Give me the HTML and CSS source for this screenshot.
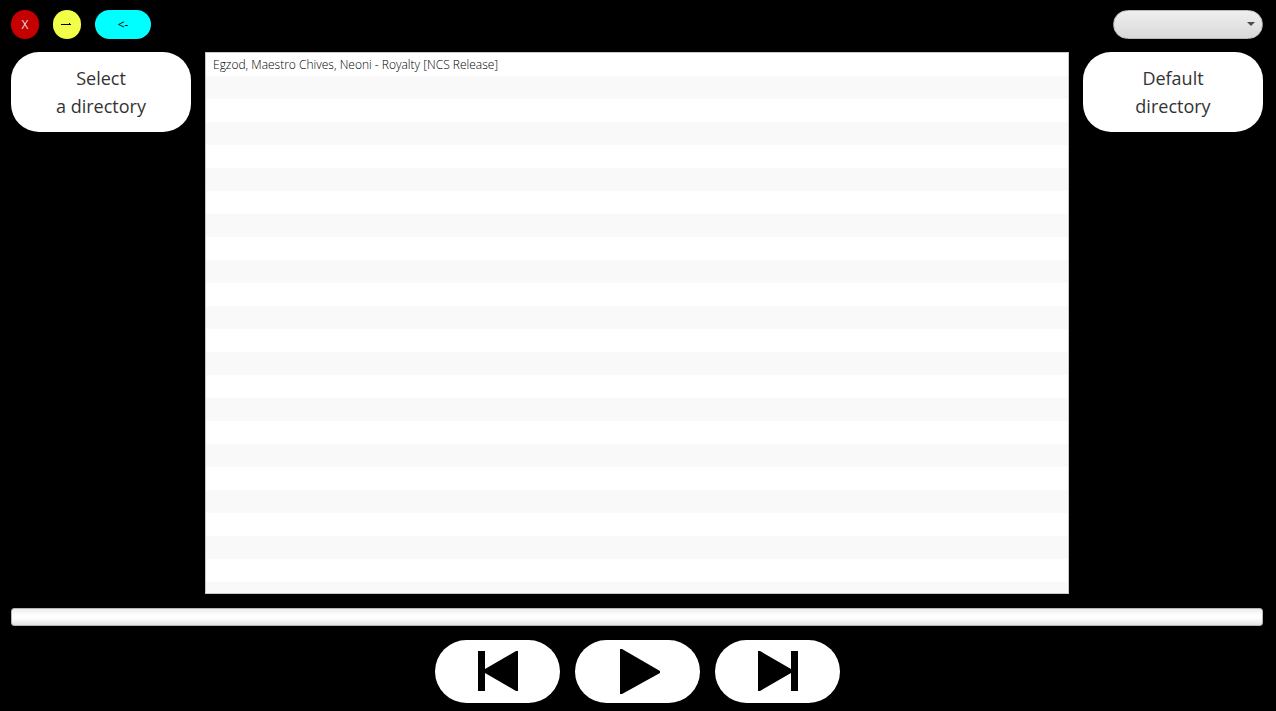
FILE: index.html
```html
<!DOCTYPE html>
<html lang="en">
<head>
<meta charset="utf-8">
<title>Music player</title>
<link rel="stylesheet" href="styles.css">
</head>
<body>
<div class="player">
  <header class="topbar">
    <button class="pill close" type="button">X</button>
    <button class="pill minimize" type="button" aria-label="Minimize">
      <svg width="12" height="6" viewBox="0 0 12 6" aria-hidden="true"><path d="M0 2H10V3H0zM8 1H9V2H8z" shape-rendering="crispEdges"/></svg>
    </button>
    <button class="pill back" type="button">&lt;-</button>
    <div class="picker">
      <select class="picker-select" aria-label="Playlist"><option></option></select>
      <svg class="picker-arrow" width="8" height="4" viewBox="0 0 8 4" aria-hidden="true"><path d="M0 0H8L4 4z"/></svg>
    </div>
  </header>
  <main class="content">
    <button class="directory" type="button">Select<br>a directory</button>
    <ul class="tracks">
      <li class="track">Egzod, Maestro Chives, Neoni - Royalty [NCS Release]</li>
    </ul>
    <button class="directory default" type="button">Default<br>directory</button>
  </main>
  <progress class="progress" value="0" max="100" aria-label="Song progress"></progress>
  <footer class="controls">
    <button class="control" type="button" aria-label="Previous">
      <svg width="41" height="41" viewBox="-1 0 41 41" aria-hidden="true"><path d="M0 0H7V18L38 0H40V40H38L7 22V40H0z"/></svg>
    </button>
    <button class="control" type="button" aria-label="Play">
      <svg width="48" height="46" viewBox="-6 0 48 46" aria-hidden="true"><path d="M1 0H3L41 22V24L3 45H1z"/></svg>
    </button>
    <button class="control" type="button" aria-label="Next">
      <svg width="41" height="41" viewBox="-1 0 41 41" aria-hidden="true"><path d="M40 0H33V18L2 0H0V40H2L33 22V40H40z"/></svg>
    </button>
  </footer>
</div>
</body>
</html>
```
FILE: styles.css
```css
* {
  box-sizing: border-box;
}

body {
  margin: 0;
  background: #000;
  color: #333;
  font: 12px/16px "Open Sans", "Noto Sans", sans-serif;
}

button {
  border: 0;
  padding: 0;
  font: inherit;
  color: inherit;
}

svg {
  display: block;
}

.player {
  display: flex;
  flex-direction: column;
  gap: 14px;
  height: 100vh;
  padding: 10px 13px 8px 11px;
}

.topbar {
  display: flex;
  gap: 14px;
  height: 29px;
  margin-bottom: -1px;
}

.pill {
  display: flex;
  align-items: center;
  justify-content: center;
  width: 28px;
  border-radius: 15px;
  color: #000;
}

.close {
  background: #c40000;
  color: #ddd;
}

.minimize {
  background: #f2ff49;
}

.back {
  width: 56px;
  background: #00ffff;
}

.picker {
  position: relative;
  width: 150px;
  margin-left: auto;
}

.picker-select {
  display: block;
  width: 100%;
  height: 100%;
  padding: 0 24px 0 12px;
  appearance: none;
  border: 1px solid #b8b8b8;
  border-radius: 15px;
  background: linear-gradient(#efefef, #d9d9d9);
  font: inherit;
}

.picker-arrow {
  position: absolute;
  top: 12px;
  right: 8px;
  fill: #4c4c4c;
  pointer-events: none;
}

.content {
  display: flex;
  flex: 1;
  align-items: flex-start;
  gap: 14px;
  min-height: 0;
}

.directory {
  width: 180px;
  padding: 12px 0;
  border-radius: 28px;
  background: #fff;
  font-size: 18px;
  line-height: 28px;
}

.tracks {
  flex: 1;
  align-self: stretch;
  margin: 0;
  padding: 0;
  overflow: hidden;
  list-style: none;
  border: 1px solid #c8c8c8;
  background: repeating-linear-gradient(#fff 0 23px, #f9f9f9 23px 46px);
}

.track {
  padding: 0 7px;
  color: #000;
  font-weight: 300;
  line-height: 24px;
}

.progress {
  display: block;
  width: 100%;
  height: 18px;
  appearance: none;
  border: 1px solid #b5b5b5;
  border-radius: 3px;
  background: linear-gradient(#ececec, #fff 40%, #fdfdfd 60%, #e4e4e4);
}

.progress::-webkit-progress-bar {
  background: transparent;
}

.progress::-webkit-progress-value {
  background: #0096c9;
}

.controls {
  display: flex;
  justify-content: center;
  gap: 15px;
}

.control {
  display: flex;
  align-items: center;
  justify-content: center;
  width: 125px;
  height: 63px;
  border-radius: 32px;
  background: #fff;
}
```
